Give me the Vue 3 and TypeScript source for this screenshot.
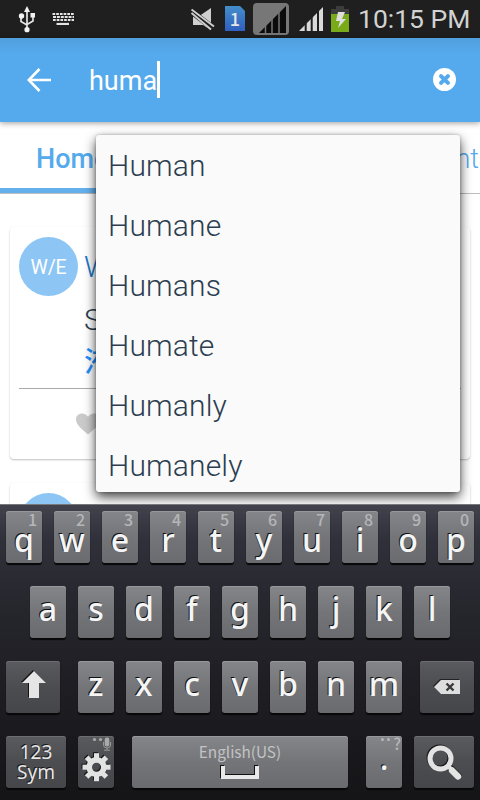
<script setup lang="ts">
import { ref } from 'vue'

interface Key {
  label: string
  hint?: string
}

const query = ref<string>('huma')
const suggestions: string[] = ['Human', 'Humane', 'Humans', 'Humate', 'Humanly', 'Humanely']
const topRow: Key[] = 'qwertyuiop'.split('').map((label, i) => ({ label, hint: String((i + 1) % 10) }))
const homeRow: Key[] = 'asdfghjkl'.split('').map((label) => ({ label }))
const bottomRow: Key[] = 'zxcvbnm'.split('').map((label) => ({ label }))
const gearTeeth: number[] = [0, 45, 90, 135, 180, 225, 270, 315]
</script>

<template>
  <div class="screen">
    <header class="status">
      <svg class="usb" viewBox="0 0 18 28" width="18" height="28">
        <g fill="none" stroke="#e4e4e4" stroke-width="1.7">
          <path d="M9 4v20M3 11v4.500l6 3.500M15 10v5l-6 3.500" />
        </g>
        <g fill="#f2f2f2">
          <path d="M9 0l3 6H6z" />
          <circle cx="3.500" cy="10" r="2.700" />
          <rect x="12.500" y="7" width="4.500" height="4.500" />
          <circle cx="9" cy="23.700" r="2.600" />
        </g>
      </svg>
      <svg class="kbd" viewBox="0 0 22 13" width="22" height="13">
        <g stroke="#e4e4e4" stroke-width="2.200" fill="none">
          <path d="M0.500 2H22" stroke-dasharray="2.700 1" />
          <path d="M1 5H22" stroke-dasharray="3 0.900" />
          <path d="M1 8H22" stroke-dasharray="2.700 1" />
          <path d="M4.500 12H17" />
        </g>
      </svg>
      <span class="spacer"></span>
      <svg class="mute" viewBox="0 0 24 24" width="24" height="24">
        <path d="M2 7.500h7L20 0v22l-8-5H2z" fill="#cfcfcf" />
        <path d="M0.500 3.500L22.500 20.500" stroke="#1f1f1f" stroke-width="6" />
        <path d="M0.500 1.500L23 18.500M0.500 5L20 21.500" stroke="#cfcfcf" stroke-width="1.900" />
      </svg>
      <span class="sim">1</span>
      <span class="signal-box">
        <svg viewBox="0 0 28 27" width="28" height="27">
          <path d="M0 27L27 0v27z" fill="#0b0b0b" />
          <path d="M6.500 10v17M13 5v22M20 0v27" stroke="#777" stroke-width="1.500" />
        </svg>
      </span>
      <svg class="signal" viewBox="0 0 24 24" width="24" height="24">
        <path d="M0 24L24 0v24z" fill="#dadada" />
        <path d="M6.700 8v16M12.700 4v20M19 0v24" stroke="#1f1f1f" stroke-width="2" />
      </svg>
      <svg class="battery" viewBox="0 0 18 26" width="18" height="26">
        <path d="M5 0h8v3h5v5H0V3h5z" fill="#3c3c3c" />
        <path d="M0 8h18v18H0z" fill="#79aa17" />
        <path d="M7 6h7l-3 7h4L7 22l2-7H5z" fill="#dedede" />
      </svg>
      <span class="clock">10:15 PM</span>
    </header>

    <div class="search-bar">
      <svg class="back" viewBox="0 0 24 24" width="24" height="24">
        <path d="M24 12H2M12.500 1L1.800 12l10.700 11" fill="none" stroke="#fff" stroke-width="2.600" />
      </svg>
      <span class="query">{{ query }}</span>
      <span class="caret"></span>
      <span class="spacer"></span>
      <svg class="clear" viewBox="0 0 24 24" width="23" height="23">
        <circle cx="12" cy="12" r="12" fill="#fff" />
        <path d="M8.400 8.400l7.200 7.200M15.600 8.400l-7.200 7.200" stroke="#55aaed" stroke-width="4.200" stroke-linecap="round" />
      </svg>
    </div>

    <main class="content">
      <nav class="tabs">
        <span class="tab active">Home</span>
        <span class="tab last">Recent</span>
      </nav>
      <article class="card">
        <div class="entry">
          <span class="avatar">W/E</span>
          <div class="copy">
            <span class="word">W</span>
            <span class="detail">S</span>
            <span class="chinese">洧</span>
          </div>
        </div>
        <div class="actions">
          <svg viewBox="0 0 24 22" width="24" height="22">
            <path d="M12 21.500C7 17 0 12 0 6.500 0 2.800 2.800 0.500 6 0.500c2.500 0 4.800 1.300 6 3.200 1.200-1.900 3.500-3.200 6-3.200 3.200 0 6 2.300 6 6C24 12 17 17 12 21.500z" fill="#cacaca" />
          </svg>
        </div>
      </article>
      <article class="card next">
        <div class="entry"><span class="avatar"></span></div>
      </article>
    </main>

    <ul class="suggestions">
      <li v-for="word in suggestions" :key="word">{{ word }}</li>
    </ul>

    <section class="keyboard">
      <div class="row numbers">
        <button v-for="key in topRow" :key="key.label" class="key">
          <small>{{ key.hint }}</small><span>{{ key.label }}</span>
        </button>
      </div>
      <div class="row home">
        <button v-for="key in homeRow" :key="key.label" class="key"><span>{{ key.label }}</span></button>
      </div>
      <div class="row">
        <button class="key dark shift">
          <svg viewBox="0 0 54 52" width="54" height="52">
            <path d="M27 9L15 21h7v15h10V21h7z" fill="#111" />
            <path d="M28 10L16 22h7v15h10V22h7z" fill="#e5e5e5" />
          </svg>
        </button>
        <button v-for="key in bottomRow" :key="key.label" class="key"><span>{{ key.label }}</span></button>
        <button class="key dark erase">
          <svg viewBox="0 0 54 52" width="54" height="52">
            <path d="M13 25l7-7h19v14H20z" fill="#222" />
            <path d="M14 26l7-7h19v14H21z" fill="#dedede" />
            <path d="M26.500 22.500l7 7M33.500 22.500l-7 7" stroke="#3a3a3c" stroke-width="2.400" />
          </svg>
        </button>
      </div>
      <div class="row">
        <button class="key dark sym">123<br />Sym</button>
        <button class="key dark gear">
          <svg viewBox="0 0 36 52" width="36" height="52">
            <g fill="#aaa">
              <circle cx="16.500" cy="3.500" r="1.600" /><circle cx="22.500" cy="3.500" r="1.600" />
              <rect x="26.700" y="1.500" width="4.600" height="9" rx="2.200" />
              <path d="M25.500 6v3q0 3 3.500 3t3.500-3V6M29 12v2M26 14.200h6" fill="none" stroke="#999" />
            </g>
            <g v-for="layer in 2" :key="layer" :transform="layer === 1 ? 'translate(17.500 30.200)' : 'translate(18.500 31.200)'">
              <rect
                v-for="angle in gearTeeth"
                :key="angle"
                x="-2.500"
                y="-14"
                width="5"
                height="7"
                :fill="layer === 1 ? '#171717' : '#e3e3e3'"
                :transform="`rotate(${angle})`"
              />
              <circle r="7.300" fill="none" stroke-width="5.600" :stroke="layer === 1 ? '#171717' : '#e3e3e3'" />
            </g>
          </svg>
        </button>
        <button class="key space">
          <em>English(US)</em>
          <svg viewBox="0 0 42 17" width="42" height="17">
            <path d="M3 1v11h34V1" fill="none" stroke="#111" stroke-width="4" />
            <path d="M4 2v11h34V2" fill="none" stroke="#e8e8e8" stroke-width="4" />
          </svg>
        </button>
        <button class="key period">
          <small><i></i><i></i>?</small><span>.</span>
        </button>
        <button class="key dark find">
          <svg viewBox="0 0 60 52" width="60" height="52">
            <g fill="none" stroke="#171717">
              <circle cx="25.500" cy="21.500" r="10.500" stroke-width="5" />
              <path d="M33 29l4 4" stroke-width="4" /><path d="M37 33l7 7" stroke-width="7" stroke-linecap="round" />
            </g>
            <g fill="none" stroke="#e3e3e3">
              <circle cx="26.500" cy="22.500" r="10.500" stroke-width="5" />
              <path d="M34 30l4 4" stroke-width="4" /><path d="M38 34.500l6 6" stroke-width="6.500" stroke-linecap="round" />
            </g>
          </svg>
        </button>
      </div>
    </section>
  </div>
</template>

<style>
body {
  margin: 0;
}
</style>

<style scoped>
.screen {
  position: relative;
  display: flex;
  flex-direction: column;
  width: 480px;
  height: 800px;
  overflow: hidden;
  background: #fff;
  font-family: Roboto, "Noto Sans CJK SC", sans-serif;
}
.spacer {
  flex: 1;
}
.status {
  display: flex;
  flex: none;
  align-items: flex-start;
  box-sizing: border-box;
  height: 38px;
  padding: 0 9px 0 18px;
  background: #1f1f1f;
}
.usb {
  margin: 6px 16px 0 0;
}
.kbd {
  margin-top: 12px;
}
.mute {
  margin: 8px 10px 0 0;
}
.sim {
  width: 20px;
  height: 25px;
  margin: 6px 8px 0 0;
  background: linear-gradient(#438ecb, #2f5fbd);
  clip-path: polygon(0 0, 15px 0, 100% 5px, 100% 100%, 0 100%);
  color: #e6e6e6;
  font: 500 18px/25px "Noto Sans CJK SC", sans-serif;
  text-align: center;
}
.signal-box {
  display: flex;
  align-items: flex-end;
  justify-content: flex-end;
  box-sizing: border-box;
  width: 36px;
  height: 32px;
  margin: 3px 10px 0 0;
  padding: 0 2px 2px 0;
  border-radius: 4px;
  background: #777;
}
.signal {
  margin: 7px 8px 0 0;
}
.battery {
  margin: 6px 9px 0 0;
}
.clock {
  width: 113px;
  color: #d2d2d2;
  font-size: 26.500px;
  line-height: 38px;
  white-space: nowrap;
}
.search-bar {
  position: relative;
  display: flex;
  flex: none;
  align-items: flex-start;
  box-sizing: border-box;
  height: 84px;
  padding: 0 24px 0 27px;
  background: linear-gradient(#509fdd, #55aaed 16px);
  box-shadow: 0 1px 6px rgba(0, 0, 0, 0.4);
}
.back {
  margin: 30px 38px 0 0;
}
.query {
  color: #fff;
  font-size: 27px;
  line-height: 87px;
}
.caret {
  width: 3px;
  height: 37px;
  margin-top: 23px;
  background: #fff;
}
.clear {
  margin-top: 30px;
}
.content {
  flex: none;
  height: 382px;
  overflow: hidden;
}
.tabs {
  display: flex;
  justify-content: space-between;
  box-sizing: border-box;
  height: 72px;
  border-bottom: 1px solid #bdbdbd;
  color: #55aaed;
  font-size: 27px;
  line-height: 74px;
}
.active {
  box-sizing: border-box;
  width: 145px;
  height: 71px;
  padding-left: 36px;
  border-bottom: 5px solid #64b0ec;
  font-weight: 500;
}
.last {
  padding-right: 1px;
  font-weight: 300;
}
.card {
  box-sizing: border-box;
  width: 460px;
  height: 232px;
  margin: 33px 10px 24px;
  padding: 10px 9px;
  border-radius: 4px;
  box-shadow: 0 1px 2px rgba(0, 0, 0, 0.25);
}
.entry {
  display: flex;
  gap: 6px;
  height: 151px;
  border-bottom: 1px solid #aaa;
}
.avatar {
  width: 59px;
  height: 59px;
  border-radius: 50%;
  background: #8dc6f4;
  color: #fff;
  font-size: 19.500px;
  letter-spacing: -0.200px;
  line-height: 61px;
  text-align: center;
}
.copy {
  display: flex;
  flex-direction: column;
  font-size: 30px;
  font-weight: 300;
}
.word {
  height: 54px;
  color: #1976c9;
  line-height: 60px;
}
.detail {
  height: 46px;
  color: #2c3e50;
  line-height: 58px;
}
.chinese {
  color: #2390fa;
  font-size: 28px;
  font-weight: 500;
  line-height: 52px;
}
.actions {
  padding: 24px 0 0 57px;
}
.next {
  margin-top: 0;
}
.suggestions {
  position: absolute;
  top: 135px;
  left: 96px;
  box-sizing: border-box;
  width: 364px;
  height: 357px;
  margin: 0;
  padding: 1px 12px 0;
  overflow: hidden;
  border-radius: 3px;
  background: #fafafa;
  box-shadow: 0 5px 12px rgba(0, 0, 0, 0.75), 0 0 3px rgba(0, 0, 0, 0.25);
  color: #2c3e50;
  font-size: 30px;
  font-weight: 300;
  letter-spacing: 0.150px;
  line-height: 60px;
  list-style: none;
}
.suggestions li {
  height: 60px;
}
.keyboard {
  position: relative;
  display: flex;
  flex-direction: column;
  gap: 23px;
  box-sizing: border-box;
  height: 296px;
  padding: 6px 6px 12px;
  border-top: 1px solid #77777d;
  background: linear-gradient(#42424d, #30303a 35px, #25252c 110px, #1d1d22 190px, #151518);
}
.row {
  display: flex;
  gap: 12px;
}
.home {
  padding-left: 24px;
}
.key {
  position: relative;
  display: block;
  flex: none;
  box-sizing: border-box;
  width: 36px;
  height: 52px;
  margin: 0;
  padding: 0;
  border: 0;
  border-radius: 3px;
  background: linear-gradient(#85868a, #747579 50%, #6a6b6e);
  box-shadow: inset 0 1px #97989b, 0 2px 1px #070708;
  color: #f5f5f5;
  font-family: "Noto Sans", sans-serif;
  text-align: center;
}
.key span {
  display: block;
  height: 52px;
  font-size: 32px;
  font-weight: 500;
  line-height: 46px;
  text-shadow: -1px -1px #111;
}
.numbers .key {
  padding-top: 16px;
}
.numbers .key span {
  height: 36px;
  line-height: 26px;
}
.key small {
  position: absolute;
  top: 0;
  right: 5px;
  color: #b5b6b8;
  font-family: "Noto Sans CJK SC", sans-serif;
  font-size: 16px;
  font-weight: 500;
  line-height: 17px;
}
.key svg {
  display: block;
}
.dark {
  background: linear-gradient(#5a5b5f, #4c4d51 50%, #454649);
  box-shadow: inset 0 1px #6c6d70, 0 2px 1px #070708;
}
.shift {
  width: 54px;
  margin-right: 6px;
}
.erase {
  width: 54px;
  margin-left: 6px;
}
.sym {
  width: 60px;
  padding-bottom: 1px;
  color: #e6e6e6;
  font-size: 19px;
  line-height: 20px;
  text-shadow: -1px -1px #171717;
}
.gear {
  margin-right: 6px;
}
.space {
  display: flex;
  flex-direction: column;
  align-items: center;
  justify-content: flex-start;
  width: 216px;
  margin-right: 6px;
}
.space em {
  height: 28px;
  color: #c3c3c4;
  font-family: "Noto Sans CJK SC", sans-serif;
  font-size: 15.300px;
  font-style: normal;
  line-height: 30px;
}
.key.period small {
  right: 1px;
  display: flex;
  gap: 3px;
  line-height: 15px;
}
.period i {
  width: 3px;
  height: 3px;
  margin-top: 2px;
  border-radius: 50%;
  background: #b5b6b8;
}
.key.period {
  padding-top: 16px;
}
.key.period span {
  height: 36px;
  line-height: 11px;
}
.find {
  width: 60px;
}
</style>
